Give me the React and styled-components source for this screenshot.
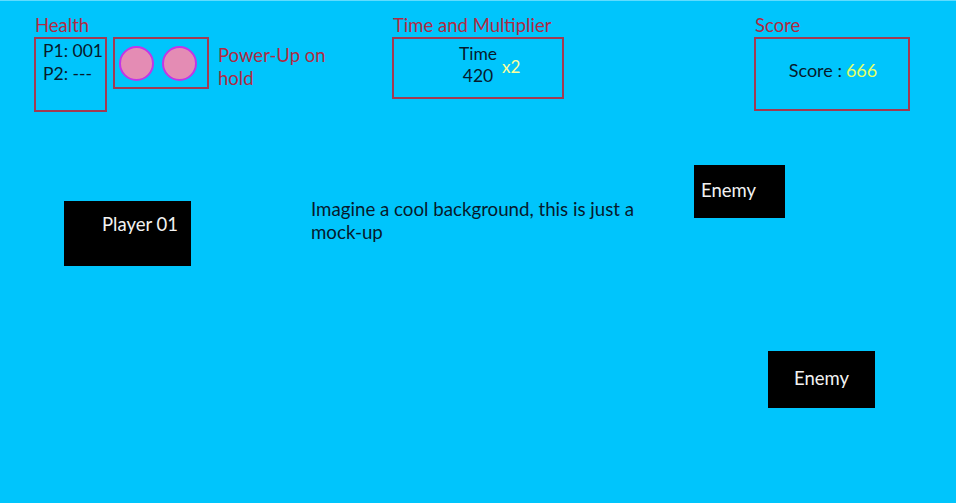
import React from "react";
import styled, { createGlobalStyle } from "styled-components";

const GlobalStyle = createGlobalStyle`
  html, body {
    margin: 0;
    padding: 0;
    background: #00c5fc;
  }
  body {
    font-family: Lato, "Open Sans", sans-serif;
  }
`;

const Screen = styled.div`
  position: relative;
  width: 956px;
  height: 503px;
  overflow: hidden;
  background: #00c5fc;
  border-top: 1px solid #5fdcff;
  box-sizing: border-box;
`;

const Hud = styled.div`
  display: grid;
  grid-template-columns: 358px 362px 1fr;
  padding: 12px 0 0 34px;
`;

const Section = styled.div`
  display: flex;
  flex-direction: column;
`;

const Label = styled.div`
  font-size: 18.5px;
  line-height: 24px;
  color: #b02a42;
  margin-left: 1px;
`;

const Row = styled.div`
  display: flex;
  align-items: flex-start;
  gap: 6px;
`;

const Frame = styled.div`
  box-sizing: border-box;
  border: 2px solid #a23a52;
  width: ${p => p.$w}px;
  height: ${p => p.$h}px;
`;

const HealthFrame = styled(Frame)`
  padding: 0 0 0 7px;
  font-size: 17.5px;
  line-height: 23px;
  color: #071a2c;
`;

const PowerFrame = styled(Frame)`
  display: flex;
  align-items: center;
  gap: 8px;
  padding-left: 4px;
`;

const Orb = styled.div`
  width: 35px;
  height: 35px;
  border-radius: 50%;
  box-sizing: border-box;
  background: #e48cb4;
  border: 2px solid #c236e6;
`;

const PowerText = styled.div`
  margin: 7px 0 0 3px;
  font-size: 18.5px;
  line-height: 23px;
  color: #b02a42;
  width: 140px;
`;

const TimeFrame = styled(Frame)`
  display: flex;
  justify-content: center;
  align-items: flex-start;
  padding-top: 4px;
  color: #071a2c;
  font-size: 17.5px;
  line-height: 22px;
  position: relative;
`;

const TimeStack = styled.div`
  display: flex;
  flex-direction: column;
  align-items: center;
`;

const Multiplier = styled.span`
  position: absolute;
  left: 108px;
  top: 17px;
  color: #fbff9c;
  font-size: 17px;
`;

const ScoreFrame = styled(Frame)`
  display: flex;
  justify-content: center;
  align-items: center;
  padding: 0 0 8px 2px;
  font-size: 18px;
  color: #071a2c;
`;

const ScoreValue = styled.span`
  color: #e2ff66;
  margin-left: 4px;
`;

const Sprite = styled.div`
  position: absolute;
  left: ${p => p.$x}px;
  top: ${p => p.$y}px;
  width: ${p => p.$w}px;
  height: ${p => p.$h}px;
  background: #000;
  color: #f2f2f2;
  font-size: 18.5px;
  box-sizing: border-box;
  display: flex;
  align-items: ${p => p.$align || "center"};
  justify-content: ${p => p.$justify || "center"};
  padding: ${p => p.$pad || "0"};
`;

const Note = styled.p`
  position: absolute;
  left: 311px;
  top: 197px;
  margin: 0;
  width: 360px;
  font-size: 18.7px;
  line-height: 23px;
  color: #071a2c;
`;

export default function App() {
  return (
    <>
      <GlobalStyle />
      <Screen>
        <Hud>
          <Section>
            <Label>Health</Label>
            <Row>
              <HealthFrame $w={73} $h={75}>
                <div>P1: 001</div>
                <div>P2: ---</div>
              </HealthFrame>
              <PowerFrame $w={96} $h={52}>
                <Orb />
                <Orb />
              </PowerFrame>
              <PowerText>Power-Up on hold</PowerText>
            </Row>
          </Section>
          <Section>
            <Label>Time and Multiplier</Label>
            <TimeFrame $w={172} $h={62}>
              <TimeStack>
                <span>Time</span>
                <span>420</span>
              </TimeStack>
              <Multiplier>x2</Multiplier>
            </TimeFrame>
          </Section>
          <Section>
            <Label>Score</Label>
            <ScoreFrame $w={156} $h={74}>
              Score :<ScoreValue>666</ScoreValue>
            </ScoreFrame>
          </Section>
        </Hud>

        <Note>Imagine a cool background, this is just a mock-up</Note>

        <Sprite $x={64} $y={200} $w={127} $h={65} $align="flex-start" $justify="flex-start" $pad="12px 0 0 38px">
          Player 01
        </Sprite>
        <Sprite $x={694} $y={164} $w={91} $h={53} $justify="flex-start" $pad="0 0 3px 7px">
          Enemy
        </Sprite>
        <Sprite $x={768} $y={350} $w={107} $h={57} $pad="0 0 4px 0">
          Enemy
        </Sprite>
      </Screen>
    </>
  );
}
